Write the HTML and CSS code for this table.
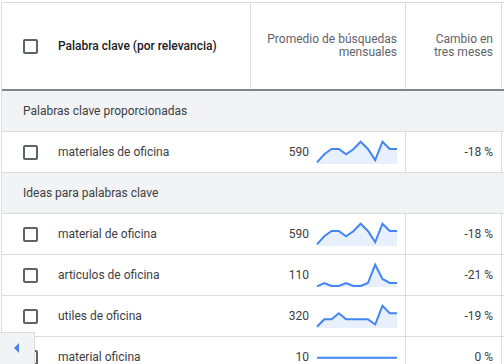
FILE: index.html
```html
<!DOCTYPE html>
<html lang="es">
<head>
<meta charset="utf-8">
<title>Ideas para palabras clave</title>
<link rel="stylesheet" href="styles.css">
</head>
<body>
<div class="table">
  <div class="row head">
    <div class="cell c1"><span class="cb"></span><span class="kw-head">Palabra clave (por relevancia)</span></div>
    <div class="cell c2 right">Promedio de búsquedas<br>mensuales</div>
    <div class="cell c3 right">Cambio en<br>tres meses</div>
    <div class="cell c4"></div>
  </div>

  <div class="band">Palabras clave proporcionadas</div>

  <div class="row">
    <div class="cell c1"><span class="cb"></span><span class="kw">materiales de oficina</span></div>
    <div class="cell c2 right"><span class="val">590</span>
      <svg class="spark" viewBox="0 0 80 24" width="80" height="24"><polygon class="area" points="0,24 0,22.3 7.27,14.3 14.55,9 21.82,9 29.09,14.3 36.36,9.3 43.64,1.7 50.91,9 58.18,20 65.45,1.7 72.73,9 80,9 80,24"/><polyline class="line" points="0,22.3 7.27,14.3 14.55,9 21.82,9 29.09,14.3 36.36,9.3 43.64,1.7 50.91,9 58.18,20 65.45,1.7 72.73,9 80,9"/></svg>
    </div>
    <div class="cell c3 right">-18 %</div>
    <div class="cell c4"></div>
  </div>

  <div class="band">Ideas para palabras clave</div>

  <div class="row">
    <div class="cell c1"><span class="cb"></span><span class="kw">material de oficina</span></div>
    <div class="cell c2 right"><span class="val">590</span>
      <svg class="spark" viewBox="0 0 80 24" width="80" height="24"><polygon class="area" points="0,24 0,22.3 7.27,14.3 14.55,9 21.82,9 29.09,14.3 36.36,9.3 43.64,1.7 50.91,9 58.18,20 65.45,1.7 72.73,9 80,9 80,24"/><polyline class="line" points="0,22.3 7.27,14.3 14.55,9 21.82,9 29.09,14.3 36.36,9.3 43.64,1.7 50.91,9 58.18,20 65.45,1.7 72.73,9 80,9"/></svg>
    </div>
    <div class="cell c3 right">-18 %</div>
    <div class="cell c4"></div>
  </div>

  <div class="row">
    <div class="cell c1"><span class="cb"></span><span class="kw">articulos de oficina</span></div>
    <div class="cell c2 right"><span class="val">110</span>
      <svg class="spark" viewBox="0 0 80 24" width="80" height="24"><polygon class="area" points="0,24 0,23.3 7.27,20 14.55,23 21.82,23 29.09,20 36.36,23 43.64,23 50.91,20 58.18,1.7 65.45,16 72.73,20 80,20 80,24"/><polyline class="line" points="0,23.3 7.27,20 14.55,23 21.82,23 29.09,20 36.36,23 43.64,23 50.91,20 58.18,1.7 65.45,16 72.73,20 80,20"/></svg>
    </div>
    <div class="cell c3 right">-21 %</div>
    <div class="cell c4"></div>
  </div>

  <div class="row">
    <div class="cell c1"><span class="cb"></span><span class="kw">utiles de oficina</span></div>
    <div class="cell c2 right"><span class="val">320</span>
      <svg class="spark" viewBox="0 0 80 24" width="80" height="24"><polygon class="area" points="0,24 0,22.8 7.27,15.2 14.55,15.2 21.82,9.2 29.09,15.2 36.36,15.2 43.64,15.2 50.91,15.2 58.18,20.5 65.45,1.8 72.73,9.2 80,9.2 80,24"/><polyline class="line" points="0,22.8 7.27,15.2 14.55,15.2 21.82,9.2 29.09,15.2 36.36,15.2 43.64,15.2 50.91,15.2 58.18,20.5 65.45,1.8 72.73,9.2 80,9.2"/></svg>
    </div>
    <div class="cell c3 right">-19 %</div>
    <div class="cell c4"></div>
  </div>

  <div class="row">
    <div class="cell c1"><span class="cb"></span><span class="kw">material oficina</span></div>
    <div class="cell c2 right"><span class="val">10</span>
      <svg class="spark" viewBox="0 0 80 24" width="80" height="24"><polyline class="line" points="0,12.7 80,12.7"/></svg>
    </div>
    <div class="cell c3 right">0 %</div>
    <div class="cell c4"></div>
  </div>
</div>

<button class="pager" type="button" aria-label="Anterior"><span class="tri"></span></button>
</body>
</html>
```

FILE: styles.css
```css
html, body {
  margin: 0;
  padding: 0;
  background: #fff;
  overflow: hidden;
}

body {
  font-family: Roboto, "Liberation Sans", Arial, sans-serif;
  font-size: 12px;
  color: #3c4043;
  width: 504px;
  height: 364px;
  position: relative;
}

.table {
  margin: 2px 0 0 1px;
  border-top: 1px solid #dadce0;
  border-left: 1px solid #dadce0;
  overflow: hidden;
}

.row {
  display: grid;
  grid-template-columns: 249px 155px 96px minmax(0, 1fr);
  height: 40px;
  border-bottom: 1px solid #dadce0;
}

.row.head {
  height: 86px;
  border-bottom: 2px solid #80868b;
}

.cell {
  display: flex;
  align-items: center;
  min-width: 0;
  white-space: nowrap;
}

.c1 {
  padding-left: 21px;
}

.head .c1 {
  border-right: 1px solid #dadce0;
}

.c2, .c3 {
  border-right: 1px solid #dadce0;
  padding-right: 8px;
}

.right {
  justify-content: flex-end;
  text-align: right;
}

.head .c2, .head .c3 {
  color: #5f6368;
  line-height: 13.5px;
}

.cb {
  width: 15px;
  height: 15px;
  box-sizing: border-box;
  border: 2px solid #5f6368;
  border-radius: 2px;
  flex: none;
  margin-right: 20px;
}

.kw-head {
  font-weight: 500;
  color: #202124;
}

.val {
  margin-right: 8px;
}

.spark {
  display: block;
  overflow: visible;
  flex: none;
}

.spark .area {
  fill: #e8f0fe;
  stroke: none;
}

.spark .line {
  fill: none;
  stroke: #4285f4;
  stroke-width: 2;
  stroke-linejoin: miter;
}

.band {
  height: 40px;
  display: flex;
  align-items: center;
  padding-left: 21px;
  background: #f1f3f4;
  border-bottom: 1px solid #dadce0;
}

.pager {
  position: absolute;
  left: 0;
  top: 332px;
  width: 35px;
  height: 32px;
  margin: 0;
  padding: 0;
  background: #f1f3f4;
  border: none;
  border-top: 1px solid #dadce0;
  border-right: 1px solid #dadce0;
  box-sizing: border-box;
}

.tri {
  position: absolute;
  left: 14px;
  top: 10px;
  width: 0;
  height: 0;
  border-top: 5px solid transparent;
  border-bottom: 5px solid transparent;
  border-right: 5px solid #4a86e8;
}
```
